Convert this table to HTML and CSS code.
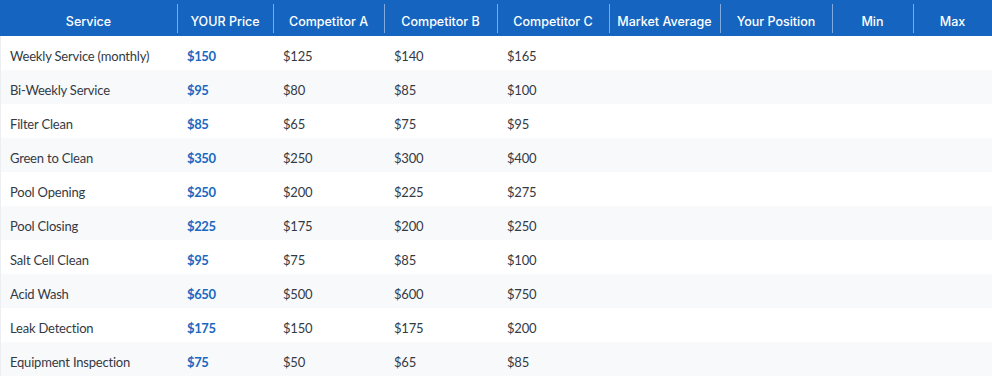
FILE: index.html
```html
<!DOCTYPE html>
<html>
<head>
<meta charset="utf-8">
<link rel="stylesheet" href="styles.css">
</head>
<body>
<table class="grid">
  <colgroup>
    <col class="c-service"><col class="c-your"><col class="c-a"><col class="c-b"><col class="c-c"><col class="c-avg"><col class="c-pos"><col class="c-min"><col class="c-max">
  </colgroup>
  <thead>
    <tr>
      <th>Service</th><th>YOUR Price</th><th>Competitor A</th><th>Competitor B</th><th>Competitor C</th><th>Market Average</th><th>Your Position</th><th>Min</th><th>Max</th>
    </tr>
  </thead>
  <tbody>
    <tr><td>Weekly Service (monthly)</td><td class="yours">$150</td><td>$125</td><td>$140</td><td>$165</td><td></td><td></td><td></td><td></td></tr>
    <tr><td>Bi-Weekly Service</td><td class="yours">$95</td><td>$80</td><td>$85</td><td>$100</td><td></td><td></td><td></td><td></td></tr>
    <tr><td>Filter Clean</td><td class="yours">$85</td><td>$65</td><td>$75</td><td>$95</td><td></td><td></td><td></td><td></td></tr>
    <tr><td>Green to Clean</td><td class="yours">$350</td><td>$250</td><td>$300</td><td>$400</td><td></td><td></td><td></td><td></td></tr>
    <tr><td>Pool Opening</td><td class="yours">$250</td><td>$200</td><td>$225</td><td>$275</td><td></td><td></td><td></td><td></td></tr>
    <tr><td>Pool Closing</td><td class="yours">$225</td><td>$175</td><td>$200</td><td>$250</td><td></td><td></td><td></td><td></td></tr>
    <tr><td>Salt Cell Clean</td><td class="yours">$95</td><td>$75</td><td>$85</td><td>$100</td><td></td><td></td><td></td><td></td></tr>
    <tr><td>Acid Wash</td><td class="yours">$650</td><td>$500</td><td>$600</td><td>$750</td><td></td><td></td><td></td><td></td></tr>
    <tr><td>Leak Detection</td><td class="yours">$175</td><td>$150</td><td>$175</td><td>$200</td><td></td><td></td><td></td><td></td></tr>
    <tr><td>Equipment Inspection</td><td class="yours">$75</td><td>$50</td><td>$65</td><td>$85</td><td></td><td></td><td></td><td></td></tr>
  </tbody>
</table>
</body>
</html>
```
FILE: styles.css
```css
html, body {
  margin: 0;
  padding: 0;
  background: #ffffff;
  overflow: hidden;
}
.grid {
  width: 992px;
  border-collapse: collapse;
  table-layout: fixed;
  font-family: "Lato", "Liberation Sans", sans-serif;
}
.c-service { width: 177px; }
.c-your { width: 96px; }
.c-a { width: 111px; }
.c-b { width: 113px; }
.c-c { width: 112px; }
.c-avg { width: 111px; }
.c-pos { width: 112px; }
.c-min { width: 81px; }
.c-max { width: 79px; }

.grid thead th {
  background: #1565c0;
  color: #ffffff;
  font-family: "Inter", "Liberation Sans", sans-serif;
  font-size: 12.5px;
  font-weight: 500;
  height: 36px;
  padding: 6px 4px 0;
  box-sizing: border-box;
  text-align: center;
  position: relative;
  white-space: nowrap;
}
.grid thead th + th::before {
  content: "";
  position: absolute;
  left: 0;
  top: 4px;
  bottom: 3px;
  width: 1px;
  background: rgba(255, 255, 255, 0.45);
}
.grid tbody td {
  height: 34px;
  padding: 5px 10px 0;
  box-sizing: border-box;
  font-size: 13px;
  letter-spacing: -0.2px;
  color: #343a44;
  white-space: nowrap;
}
.grid tbody td:first-child {
  box-shadow: inset 1px 0 0 #eceef2;
}
.grid tbody tr:nth-child(even) td {
  background: #f8f9fb;
}
.grid tbody td.yours {
  color: #1a68c2;
  font-weight: 700;
  letter-spacing: -0.4px;
}
```
